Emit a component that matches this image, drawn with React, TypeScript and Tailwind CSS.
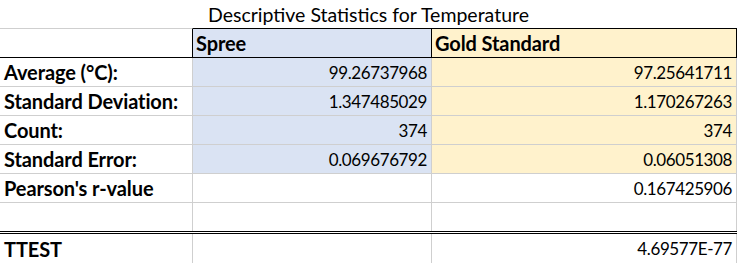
const rows = [
  { label: "Average (°C):", spree: "99.26737968", gold: "97.25641711", fill: true },
  { label: "Standard Deviation:", spree: "1.347485029", gold: "1.170267263", fill: true },
  { label: "Count:", spree: "374", gold: "374", fill: true },
  { label: "Standard Error:", spree: "0.069676792", gold: "0.06051308", fill: true },
  { label: "Pearson's r-value", spree: "", gold: "0.167425906", fill: false },
];

const bold = "font-bold text-[20px] tracking-[-0.1px]";

export default function App() {
  return (
    <div className="w-[740px] h-[263px] bg-white text-black font-['Lato',sans-serif] text-[17px] tracking-[-0.4px] leading-none overflow-hidden">
      {/* Title */}
      <div className="w-[737px] h-[28px] flex items-center justify-center pt-[1px] text-[19.5px] tracking-normal">
        Descriptive Statistics for Temperature
      </div>

      {/* Header */}
      <div className="grid grid-cols-[193px_239px_305px] h-[30px]">
        <div className="border-t border-t-[#cfcfcf] border-b border-b-black border-r border-r-black" />
        <div className={`bg-[#dae3f3] border-t border-b border-r border-black flex items-center pl-[3px] ${bold}`}>
          Spree
        </div>
        <div className={`bg-[#fff2cc] border-t border-b border-r border-black flex items-center pl-[3px] ${bold}`}>
          Gold Standard
        </div>
      </div>

      {/* Data rows */}
      {rows.map((r) => (
        <div key={r.label} className="grid grid-cols-[193px_239px_305px] h-[29px]">
          <div className={`border-b border-r border-[#cfcfcf] flex items-center pl-[4px] ${bold}`}>
            {r.label}
          </div>
          <div
            className={`border-b border-r border-[#cfcfcf] flex items-center justify-end pr-[4px] ${
              r.fill ? "bg-[#dae3f3]" : "bg-white"
            }`}
          >
            {r.spree}
          </div>
          <div
            className={`border-b border-r border-[#cfcfcf] flex items-center justify-end pr-[4px] ${
              r.fill ? "bg-[#fff2cc]" : "bg-white"
            }`}
          >
            {r.gold}
          </div>
        </div>
      ))}

      {/* Empty row with double bottom border */}
      <div className="grid grid-cols-[193px_239px_305px] h-[31px] border-b-[3px] border-double border-black w-[737px]">
        <div className="border-r border-[#cfcfcf]" />
        <div className="border-r border-[#cfcfcf]" />
        <div className="border-r border-[#cfcfcf]" />
      </div>

      {/* TTEST */}
      <div className="grid grid-cols-[193px_239px_305px] h-[30px]">
        <div className={`border-b border-r border-[#cfcfcf] flex items-center pl-[4px] ${bold}`}>TTEST</div>
        <div className="border-b border-r border-[#cfcfcf]" />
        <div className="border-b border-r border-[#cfcfcf] flex items-center justify-end pr-[4px]">
          4.69577E-77
        </div>
      </div>
    </div>
  );
}
